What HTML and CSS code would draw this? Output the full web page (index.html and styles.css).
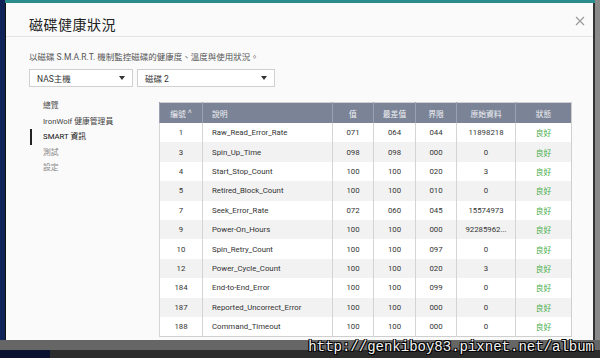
FILE: index.html
```html
<!DOCTYPE html>
<html lang="zh-Hant">
<head>
    <meta charset="UTF-8">
    <meta name="viewport" content="width=device-width, initial-scale=1.0">
    <title>磁碟健康狀況</title>
    <link rel="stylesheet" href="styles.css">
</head>
<body>
<div class="screen">
    <div class="modal">
        <div class="modal-head">
            <h2>磁碟健康狀況</h2>
            <span class="close">
                <svg width="10" height="10" viewBox="0 0 10 10"><path d="M1 1L9 9M9 1L1 9" stroke="#9a9a9a" stroke-width="1.2"/></svg>
            </span>
        </div>
        <div class="modal-body">
            <p class="desc">以磁碟 S.M.A.R.T. 機制監控磁碟的健康度、溫度與使用狀況。</p>
            <div class="selects">
                <div class="select host">NAS主機<span class="caret"></span></div>
                <div class="select disk">磁碟 2<span class="caret"></span></div>
            </div>
            <div class="main">
                <ul class="nav">
                    <li>總覽</li>
                    <li>IronWolf 健康管理員</li>
                    <li class="active">SMART 資訊</li>
                    <li class="muted">測試</li>
                    <li class="muted">設定</li>
                </ul>
                <table class="smart">
                    <colgroup>
                        <col style="width:43px"><col style="width:130px"><col style="width:41px"><col style="width:42px"><col style="width:41px"><col style="width:59px"><col style="width:56px">
                    </colgroup>
                    <thead>
                        <tr><th>編號 <span class="sort">˄</span></th><th class="left">說明</th><th>值</th><th>最差值</th><th>界限</th><th>原始資料</th><th>狀態</th></tr>
                    </thead>
                    <tbody id="rows"></tbody>
                </table>
            </div>
        </div>
    </div>
    <div class="watermark">http://genkiboy83.pixnet.net/album</div>
</div>

<script>
    let data = [
        ["1", "Raw_Read_Error_Rate", "071", "064", "044", "11898218"],
        ["3", "Spin_Up_Time", "098", "098", "000", "0"],
        ["4", "Start_Stop_Count", "100", "100", "020", "3"],
        ["5", "Retired_Block_Count", "100", "100", "010", "0"],
        ["7", "Seek_Error_Rate", "072", "060", "045", "15574973"],
        ["9", "Power-On_Hours", "100", "100", "000", "92285962..."],
        ["10", "Spin_Retry_Count", "100", "100", "097", "0"],
        ["12", "Power_Cycle_Count", "100", "100", "020", "3"],
        ["184", "End-to-End_Error", "100", "100", "099", "0"],
        ["187", "Reported_Uncorrect_Error", "100", "100", "000", "0"],
        ["188", "Command_Timeout", "100", "100", "000", "0"]
    ];

    let rows = document.getElementById("rows");
    data.forEach(item => {
        let tr = document.createElement("tr");
        tr.innerHTML = `<td>${item[0]}</td><td class="left">${item[1]}</td><td>${item[2]}</td>
            <td>${item[3]}</td><td>${item[4]}</td><td>${item[5]}</td><td class="good">良好</td>`;
        rows.appendChild(tr);
    });
</script>
</body>
</html>
```

FILE: styles.css
```css
body {
    margin: 0;
    font-family: Roboto, "Noto Sans CJK TC", sans-serif;
    color: #333;
    overflow: hidden;
}
.screen {
    position: relative;
    width: 600px;
    height: 358px;
    box-sizing: border-box;
    padding: 3px 7px 18px 5px;
    background:
        linear-gradient(#2a8c8c, #2a8c8c) 5px 0 / 590px 3px no-repeat,
        linear-gradient(#666, #666) 0 340px / 600px 10px no-repeat,
        linear-gradient(#2c2c2c, #2c2c2c) 50px 350px / 550px 8px no-repeat,
        linear-gradient(#0a1430, #0a1430) 0 350px / 50px 8px no-repeat,
        linear-gradient(90deg, #0f2358 0, #0f2358 5px, #1a1a1a 5px, #1a1a1a 594px, #8a8a8a 594px);
}
.modal {
    height: 337px;
    background: #fafafa;
    border-left: 1px solid #111;
    box-shadow: 2px 0 0 #333;
}
.modal-head {
    display: flex;
    justify-content: space-between;
    align-items: flex-start;
    height: 33px;
    border-bottom: 1px solid #e4e4e4;
    padding: 0 8px 0 23px;
}
.modal-head h2 {
    margin: 0;
    padding-top: 11px;
    font-size: 14px;
    font-weight: normal;
    color: #222;
    letter-spacing: 0.5px;
}
.close {
    padding-top: 8px;
}
.modal-body {
    padding: 0 21px 0 23px;
}
.desc {
    margin: 0;
    padding-top: 14px;
    font-size: 8.5px;
    color: #555;
    line-height: 13px;
}
.selects {
    display: flex;
    gap: 4px;
    margin-top: 5px;
}
.select {
    display: flex;
    justify-content: space-between;
    align-items: center;
    box-sizing: border-box;
    height: 18px;
    padding: 0 7px;
    background: #fff;
    border: 1px solid #d0d0d0;
    font-size: 8.5px;
    color: #333;
}
.host {
    width: 104px;
}
.disk {
    width: 138px;
}
.caret {
    width: 0;
    height: 0;
    border-left: 3px solid transparent;
    border-right: 3px solid transparent;
    border-top: 4px solid #333;
}
.main {
    display: flex;
    align-items: flex-start;
    margin-top: 15px;
}
.nav {
    list-style: none;
    margin: -4px 0 0;
    padding: 0;
    width: 130px;
    font-size: 7.8px;
    color: #444;
}
.nav li {
    height: 15.6px;
    line-height: 15.6px;
    padding-left: 11px;
    border-left: 2px solid transparent;
    margin-left: 1px;
}
.nav li.active {
    color: #111;
    border-left-color: #222;
}
.nav li.muted {
    color: #888;
}
.smart {
    border-collapse: collapse;
    table-layout: fixed;
    width: 412px;
    font-size: 7.8px;
    border: 1px solid #cfcfcf;
}
.smart th {
    height: 20px;
    padding: 0;
    background: #7b8497;
    color: #f0f1f4;
    font-weight: normal;
    text-align: center;
    border-left: 1px solid #99a0b0;
}
.smart td {
    height: 19.4px;
    padding: 0;
    text-align: center;
    color: #333;
    border-left: 1px solid #d4d4d4;
}
.smart .left {
    text-align: left;
    padding-left: 9px;
}
.smart tbody tr:nth-child(even) {
    background: #f2f2f2;
}
.smart tbody tr:nth-child(odd) {
    background: #fff;
}
.smart td.good {
    color: #4caf50;
}
.sort {
    font-size: 7px;
    vertical-align: top;
}
.watermark {
    position: absolute;
    right: 6px;
    top: 339px;
    font-family: "Liberation Mono", monospace;
    font-size: 14px;
    color: #f2f2f2;
    text-shadow: 1px 1px 0 #000, -1px -1px 0 #000, 1px -1px 0 #000, -1px 1px 0 #000;
}
```
